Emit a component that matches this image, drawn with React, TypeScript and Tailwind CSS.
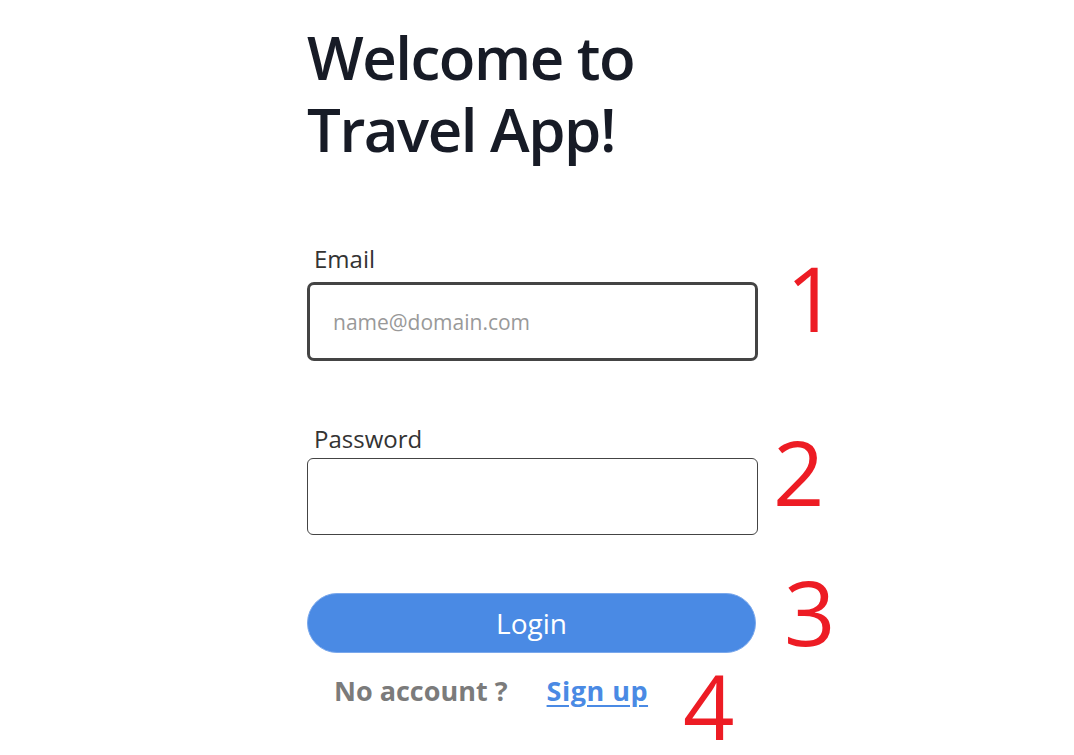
export default function App() {
  return (
    <div className="min-h-[755px] overflow-hidden bg-white font-['Open_Sans','Noto_Sans',sans-serif] text-[#1a1d24]">
      <div className="ml-[307px] w-[451px] pt-[21px]">
        <h1 className="text-[60px] font-semibold leading-[72px] tracking-[-1.5px] text-[#171b26]">
          Welcome to
          <br />
          Travel App!
        </h1>

        <form className="mt-[78px] flex flex-col" onSubmit={(e) => e.preventDefault()}>
          {/* Email */}
          <label className="relative flex flex-col">
            <span className="pl-[7px] text-[24px] leading-[32px] text-[#333]">Email</span>
            <input
              type="email"
              placeholder="name@domain.com"
              className="mt-[7px] h-[79px] rounded-[7px] border-[3px] border-[#444] px-[23px] text-[21px] text-[#333] outline-none placeholder:text-[#999]"
            />
            <span className="absolute left-[479px] top-[9px] text-[90px] leading-none text-[#ed1c24]">1</span>
          </label>

          {/* Password */}
          <label className="relative mt-[62px] flex flex-col">
            <span className="pl-[7px] text-[24px] leading-[32px] text-[#333]">Password</span>
            <input
              type="password"
              className="mt-[3px] h-[77px] rounded-[6px] border border-[#444] px-[24px] text-[20px] outline-none"
            />
            <span className="absolute left-[466px] top-[3px] text-[90px] leading-none text-[#ed1c24]">2</span>
          </label>

          {/* Login */}
          <div className="relative mt-[58px]">
            <button
              type="submit"
              className="h-[60px] w-[449px] rounded-full border border-[#7aa8ec] bg-[#4a8ae4] text-[28px] text-white"
            >
              Login
            </button>
            <span className="absolute left-[477px] top-[-27px] text-[90px] leading-none text-[#ed1c24]">3</span>
          </div>

          {/* Sign up */}
          <div className="relative mt-[20px] flex items-center pl-[27px] text-[27px] font-bold leading-[36px]">
            <span className="text-[#7b7b7b]">No account ?</span>
            <a href="#" className="ml-[39px] tracking-[0.5px] text-[#4a8ae4] underline underline-offset-[4px]">
              Sign up
            </a>
            <span className="absolute left-[376px] top-[-3px] text-[90px] font-normal leading-[70px] text-[#ed1c24]">4</span>
          </div>
        </form>
      </div>
    </div>
  );
}
